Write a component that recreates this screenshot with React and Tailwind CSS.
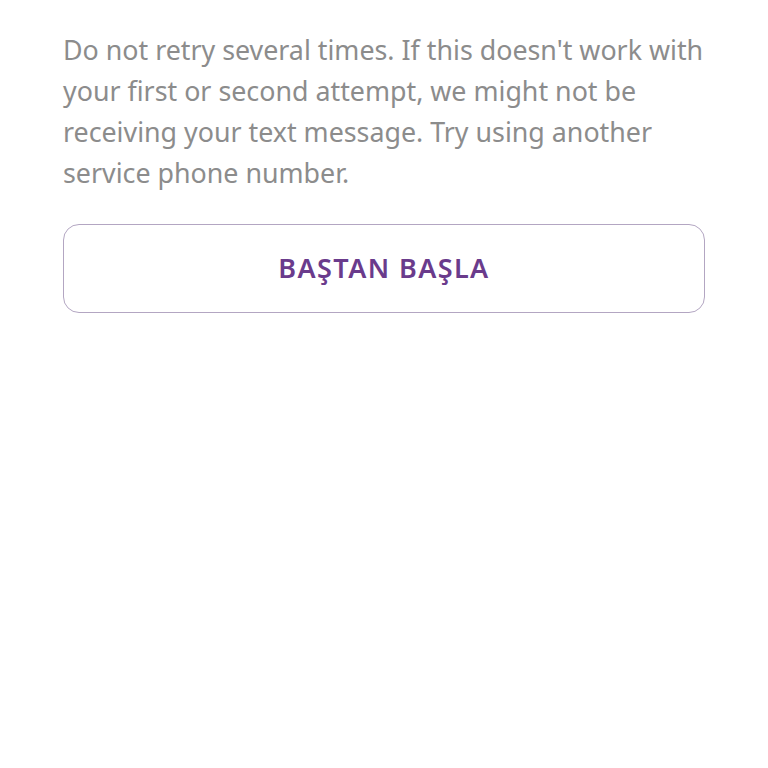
export default function App() {
  return (
    <div className="w-[768px] h-[768px] bg-white px-[63px] pt-[29px] font-['Noto_Sans',sans-serif]">
      <p className="text-[26.8px] leading-[41px] text-[#8c8c8c]">
        Do not retry several times. If this doesn't work with your first or second attempt, we might not be receiving your text message. Try using another service phone number.
      </p>
      <button className="mt-[31px] w-full h-[89px] rounded-[16px] border border-[#b3a6c2] bg-white flex items-center justify-center">
        <span className="text-[27px] font-semibold text-[#6a3b8c] tracking-[1.4px]">BAŞTAN BAŞLA</span>
      </button>
    </div>
  );
}
